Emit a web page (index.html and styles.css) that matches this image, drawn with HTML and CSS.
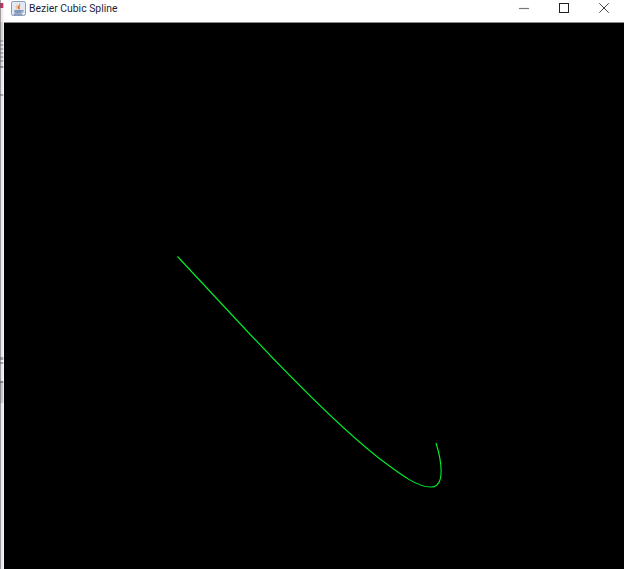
FILE: index.html
```html
<!DOCTYPE html>
<html lang="en">
<head>
<meta charset="utf-8">
<title>Bezier Cubic Spline</title>
<link rel="stylesheet" href="styles.css">
</head>
<body>
<div class="window">
  <div class="strip"></div>
  <div class="main">
    <header class="titlebar">
      <svg class="app-icon" viewBox="0 0 16 16" aria-hidden="true">
        <rect x="0.5" y="0.5" width="15" height="15" rx="2" fill="#e3e9f2" stroke="#7f93b3"/>
        <path d="M8.5 1.5C11 4 6 5 7 7.5 7.4 8.5 8.5 8.6 8.5 9.5 11 7.8 8.2 6.5 9.5 4.8 10.2 3.8 9.8 2.5 8.5 1.5Z" fill="#e2702a"/>
        <path d="M6.5 4C5 5.5 5 7.5 6.5 9" fill="none" stroke="#efb183"/>
        <path d="M3.5 9.5h8v2c0 1-.8 1.5-1.8 1.5h-4.4c-1 0-1.8-.5-1.8-1.5Z" fill="#7d97bb"/>
        <path d="M11.5 10h1c1 0 1 1.8-1 2" fill="none" stroke="#5f7ca3"/>
        <path d="M3 14h9" stroke="#4c6a92"/>
      </svg>
      <span class="title">Bezier Cubic Spline</span>
      <div class="controls">
        <svg class="ctl ctl-min" viewBox="0 0 10 10" aria-hidden="true"><path d="M0 5.5h10" stroke="#777" stroke-width="1.2"/></svg>
        <svg class="ctl ctl-max" viewBox="0 0 10 10" aria-hidden="true"><rect x="0.5" y="0.5" width="9" height="9" fill="none" stroke="#222"/></svg>
        <svg class="ctl ctl-close" viewBox="0 0 10 10" aria-hidden="true"><path d="M0.3 0.3l9.4 9.4M9.7 0.3l-9.4 9.4" stroke="#333" stroke-width="0.9"/></svg>
      </div>
    </header>
    <svg class="canvas" viewBox="4 23 620 546" aria-hidden="true">
      <path class="curve" d="M177.5 256.5L232 315C285 372 340 428 380 459C400 474 418 488 432 487C445 486 442 462 436 443"/>
    </svg>
  </div>
</div>
</body>
</html>
```

FILE: styles.css
```css
html, body {
  margin: 0;
  padding: 0;
  height: 100%;
  background: #000;
}

.window {
  display: flex;
  width: 624px;
  height: 569px;
  overflow: hidden;
}

.strip {
  flex: 0 0 4px;
  background:
    linear-gradient(to right, rgba(90, 92, 98, .55) 0 1px, transparent 1px 3px, rgba(255, 255, 255, .7) 3px),
    linear-gradient(to bottom,
      #fff 0 3px,
      #c9305f 3px 8px,
      #f3e9ea 8px 22px,
      #d3d4d6 22px 40px,
      #a9abae 40px 42px, #dcdde0 42px 44px,
      #a9abae 44px 46px, #dcdde0 46px 48px,
      #a9abae 48px 50px, #dcdde0 50px 52px,
      #a9abae 52px 54px, #dcdde0 54px 56px,
      #a9abae 56px 58px, #dcdde0 58px 60px,
      #a9abae 60px 62px,
      #d9dadc 62px 66px,
      #8f9194 66px 68px,
      #e6e8ee 68px 94px,
      #a3a5aa 94px 96px,
      #e6e8ee 96px 357px,
      #9ea0a4 357px 360px,
      #eceef0 360px 362px,
      #9ea0a4 362px 364px,
      #e6e8ee 364px 381px,
      #808286 381px 383px,
      #c4c6cb 383px 403px,
      #e6e8ee 403px 100%);
}

.main {
  flex: 1;
  display: flex;
  flex-direction: column;
  min-width: 0;
}

.titlebar {
  flex: 0 0 22px;
  display: flex;
  align-items: flex-start;
  background: #fff;
  border-bottom: 1px solid #8c8c8c;
  padding-left: 7px;
}

.app-icon {
  width: 15px;
  height: 15px;
  margin-top: 1px;
}

.title {
  margin-left: 3px;
  font: 10.4px/17px Roboto, "Noto Sans", sans-serif;
  color: #1b1f3a;
}

.controls {
  margin-left: auto;
  display: flex;
  align-items: flex-start;
}

.ctl {
  display: block;
  width: 10px;
  height: 10px;
  margin-top: 3px;
}

.ctl-min { margin-right: 30px; }
.ctl-max { margin-right: 30px; }
.ctl-close { margin-right: 15px; }

.canvas {
  display: block;
  flex: 1;
  width: 620px;
  min-height: 0;
  background: #000;
}

.curve {
  fill: none;
  stroke: #00ee2c;
  stroke-width: 1.15;
}
```
